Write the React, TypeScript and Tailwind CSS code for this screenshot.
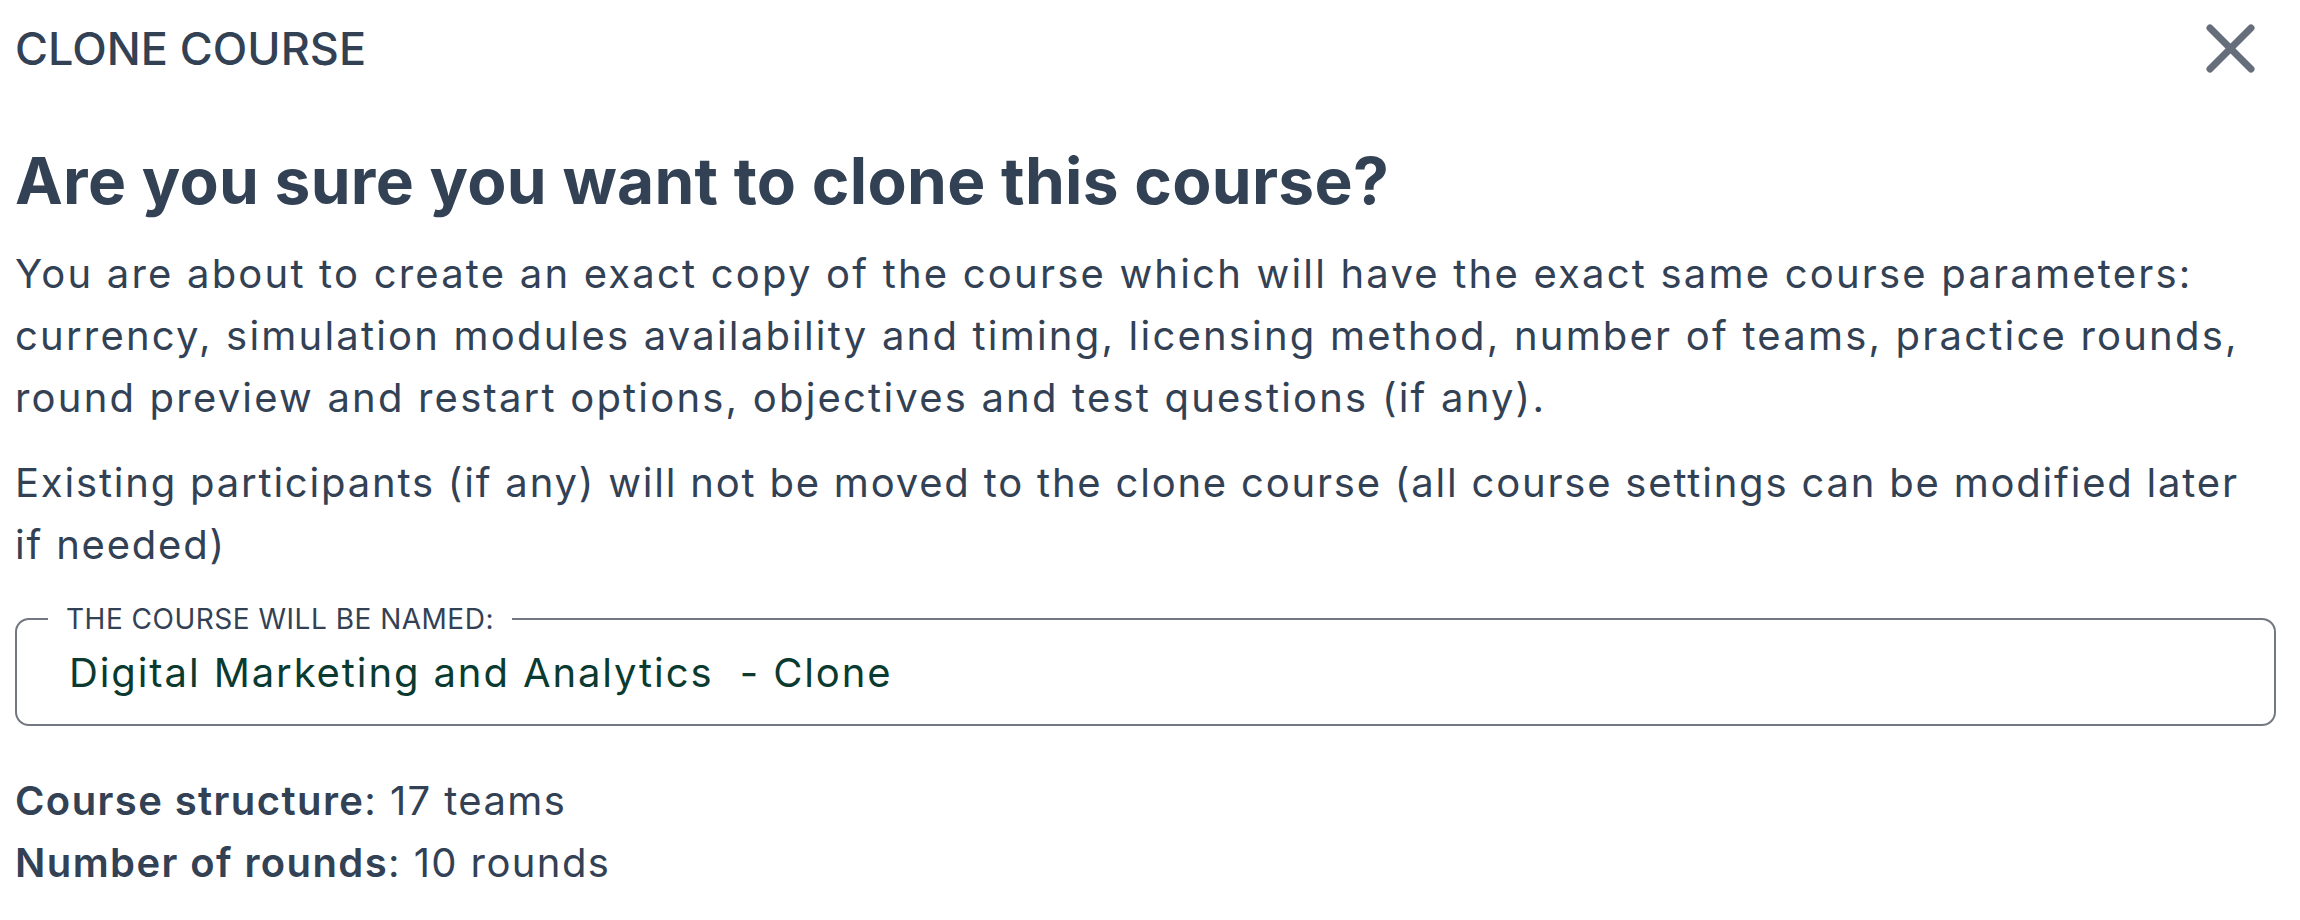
import React from 'react';

const CloseIcon: React.FC = () => (
  <svg width="49" height="49" viewBox="0 0 49 49" fill="none" stroke="#676e7b" strokeWidth="7" strokeLinecap="round">
    <path d="M4 4 L45 45" />
    <path d="M45 4 L4 45" />
  </svg>
);

const App: React.FC = () => {
  return (
    <div className="w-[2300px] h-[920px] bg-white pl-[15px] pr-[24px] font-['Inter',sans-serif] text-[#334155]">
      <div className="flex items-start justify-between">
        <h2 className="mt-[26px] text-[45px] font-medium leading-none">CLONE COURSE</h2>
        <button className="mt-[24px] mr-[21px]" aria-label="Close">
          <CloseIcon />
        </button>
      </div>

      <h1 className="mt-[68px] text-[64px] font-bold leading-[80px] tracking-[0.3px]">
        Are you sure you want to clone this course?
      </h1>

      <p className="mt-[22px] text-[40px] leading-[62px] tracking-[2.2px]">
        You are about to create an exact copy of the course which will have the exact same course parameters:
        currency, simulation modules availability and timing, licensing method, number of teams, practice rounds,
        round preview and restart options, objectives and test questions (if any).
      </p>
      <p className="mt-[23px] text-[40px] leading-[62px] tracking-[1.8px]">
        Existing participants (if any) will not be moved to the clone course (all course settings can be modified later
        if needed)
      </p>

      <fieldset className="mt-[29px] h-[121px] rounded-[14px] border-2 border-[#73777f] pl-[31px] pr-4">
        <legend className="px-[18px] text-[28px] leading-[28px] uppercase tracking-[0.5px]">
          The course will be named:
        </legend>
        <input
          readOnly
          defaultValue="Digital Marketing and Analytics  - Clone"
          className="mt-[16px] h-[48px] w-full bg-transparent pl-[21px] text-[40px] tracking-[1.9px] text-[#0b3b30] outline-none"
        />
      </fieldset>

      <div className="mt-[44px] text-[40px] leading-[62px] tracking-[1.4px]">
        <div>
          <span className="font-semibold">Course structure</span>: 17 teams
        </div>
        <div>
          <span className="font-semibold">Number of rounds</span>: 10 rounds
        </div>
      </div>
    </div>
  );
};

export default App;
